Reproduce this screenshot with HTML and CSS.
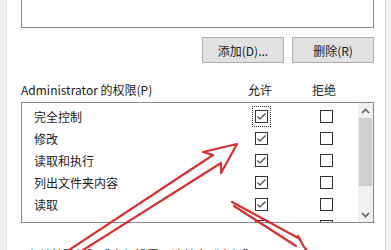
FILE: index.html
```html
<!DOCTYPE html>
<html lang="zh-CN">
<head>
    <meta charset="UTF-8">
    <meta name="viewport" content="width=device-width, initial-scale=1.0">
    <title>Administrator 的权限</title>
    <link rel="stylesheet" href="styles.css">
</head>
<body>
    <div class="window">
        <div class="panel">
            <!-- 用户列表 -->
            <div class="users-list"></div>

            <div class="actions">
                <button class="btn">添加(D)...</button>
                <button class="btn">删除(R)</button>
            </div>

            <!-- 权限表头 -->
            <div class="perm-head">
                <span class="perm-title">Administrator 的权限(P)</span>
                <span class="col-title">允许</span>
                <span class="col-title">拒绝</span>
                <span></span>
            </div>

            <div class="perm-list">
                <div class="perm-rows">
                    <div class="perm-row">
                        <span class="perm-name">完全控制</span>
                        <span class="cell"><span class="focus"><span class="checkbox checked"></span></span></span>
                        <span class="cell"><span class="checkbox"></span></span>
                    </div>
                    <div class="perm-row">
                        <span class="perm-name">修改</span>
                        <span class="cell"><span class="checkbox checked"></span></span>
                        <span class="cell"><span class="checkbox"></span></span>
                    </div>
                    <div class="perm-row">
                        <span class="perm-name">读取和执行</span>
                        <span class="cell"><span class="checkbox checked"></span></span>
                        <span class="cell"><span class="checkbox"></span></span>
                    </div>
                    <div class="perm-row">
                        <span class="perm-name">列出文件夹内容</span>
                        <span class="cell"><span class="checkbox checked"></span></span>
                        <span class="cell"><span class="checkbox"></span></span>
                    </div>
                    <div class="perm-row">
                        <span class="perm-name">读取</span>
                        <span class="cell"><span class="checkbox checked"></span></span>
                        <span class="cell"><span class="checkbox"></span></span>
                    </div>
                    <div class="perm-row">
                        <span class="perm-name">写入</span>
                        <span class="cell"><span class="checkbox checked"></span></span>
                        <span class="cell"><span class="checkbox"></span></span>
                    </div>
                </div>
                <div class="scrollbar">
                    <div class="scroll-btn">
                        <svg width="9" height="6" viewBox="0 0 9 6"><polyline points="1,5 4.5,1.5 8,5" fill="none" stroke="#606060" stroke-width="1.6"/></svg>
                    </div>
                    <div class="scroll-thumb"></div>
                    <div class="scroll-track"></div>
                    <div class="scroll-btn">
                        <svg width="9" height="6" viewBox="0 0 9 6"><polyline points="1,1 4.5,4.5 8,1" fill="none" stroke="#606060" stroke-width="1.6"/></svg>
                    </div>
                </div>
            </div>

            <p class="hint">有关特殊权限或高级设置，请单击“高级”。</p>
        </div>
        <div class="edge"></div>

        <!-- 红色标注箭头 -->
        <svg class="marks" width="391" height="250" viewBox="0 0 391 250">
            <g fill="none" stroke="#d21a1a" stroke-width="2.2" stroke-linecap="round" stroke-linejoin="round" opacity="0.9">
                <path d="M66,252 L213,155"/>
                <path d="M80,252 L221,163"/>
                <path d="M213,155 L203,152 L237,144 L221,173 L221,163"/>
                <path d="M232,202 L300,239"/>
                <path d="M234,206 L296,246"/>
                <path d="M300,239 L298,236 L304,247 L308,252"/>
            </g>
        </svg>
    </div>
</body>
</html>
```

FILE: styles.css
```css
/* Ümumi */
body {
    margin: 0;
    font-family: "Noto Sans CJK SC", "Noto Sans", sans-serif;
    font-size: 12px;
    color: #1a1a1a;
}

.window {
    position: relative;
    display: flex;
    width: 391px;
    height: 250px;
    overflow: hidden;
    background-color: #f0f0f0;
}

.panel {
    margin-left: 6px;
    width: 379px;
    padding: 0 11px 0 14px;
    box-sizing: border-box;
    background-color: #fff;
    border-left: 1px solid #e6e6e6;
}

.edge {
    flex: 1;
    border-left: 1px solid #dcdcdc;
    background-color: #f3f3f3;
}

/* Üst siyahı */
.users-list {
    height: 28px;
    box-sizing: border-box;
    border: 1px solid #828790;
    border-top: none;
}

.actions {
    display: flex;
    justify-content: flex-end;
    gap: 8px;
    margin-top: 9px;
}

.btn {
    width: 82px;
    height: 26px;
    padding: 0;
    font-family: inherit;
    font-size: 12px;
    color: #1a1a1a;
    background-color: #e1e1e1;
    border: 1px solid #adadad;
}

/* Cədvəl başlığı */
.perm-head {
    display: grid;
    grid-template-columns: 1fr 64px 64px 18px;
    height: 18px;
    line-height: 18px;
    margin-top: 18px;
    margin-bottom: 3px;
}

.col-title {
    text-align: center;
}

.perm-list {
    display: flex;
    height: 121px;
    box-sizing: border-box;
    border: 1px solid #828790;
}

.perm-rows {
    flex: 1;
    padding-top: 2px;
    overflow: hidden;
}

.perm-row {
    display: grid;
    grid-template-columns: 1fr 66px 64px;
    height: 22px;
    align-items: center;
}

.perm-name {
    padding-left: 12px;
}

.cell {
    display: flex;
    justify-content: center;
    align-items: center;
}

.focus {
    display: flex;
    padding: 3px 2px;
    border: 1px dotted #333;
}

.checkbox {
    display: block;
    width: 13px;
    height: 13px;
    box-sizing: border-box;
    border: 1px solid #333;
    background: #fff;
}

.checkbox.checked {
    background: #fff url("data:image/svg+xml;utf8,<svg xmlns='http://www.w3.org/2000/svg' width='11' height='11' viewBox='0 0 11 11'><polyline points='1.5,5.5 4,8 9.5,2.5' fill='none' stroke='%23444' stroke-width='1.2'/></svg>") center no-repeat;
}

/* Scroll */
.scrollbar {
    display: flex;
    flex-direction: column;
    width: 15px;
    background-color: #f0f0f0;
}

.scroll-btn {
    display: flex;
    justify-content: center;
    align-items: center;
    height: 15px;
}

.scroll-thumb {
    height: 68px;
    margin: 0 1px;
    background-color: #cdcdcd;
}

.scroll-track {
    flex: 1;
}

.hint {
    margin: 23px 0 0 6px;
    line-height: 18px;
}

/* Annotasiya */
.marks {
    position: absolute;
    left: 0;
    top: 0;
    pointer-events: none;
}
```
